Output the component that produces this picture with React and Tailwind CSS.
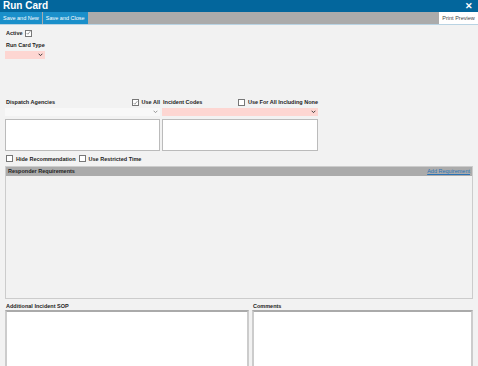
export default function App() {
  const Check = ({ on }) => (
    <span className="inline-flex w-[7px] h-[7px] border border-[#777] bg-white items-center justify-center shrink-0">
      {on && (
        <svg viewBox="0 0 8 8" className="w-[6px] h-[6px]">
          <path d="M1 4l2 2 4-5" fill="none" stroke="#666" strokeWidth="1" />
        </svg>
      )}
    </span>
  )
  const Chevron = () => (
    <svg viewBox="0 0 8 6" className="w-[5px] h-[4px]">
      <path d="M1 1l3 3 3-3" fill="none" stroke="#333" strokeWidth="1.5" />
    </svg>
  )

  return (
    <div className="w-[478px] h-[366px] overflow-hidden bg-[#f2f2f2] text-[#222] font-['Liberation_Sans',sans-serif] text-[5.5px] font-bold flex flex-col">
      {/* Title bar */}
      <div className="h-[12px] shrink-0 bg-[#03669c] flex items-center justify-between px-[3px]">
        <span className="text-white text-[10px] leading-none">Run Card</span>
        <span className="text-white text-[9px] leading-none mr-[2px]">✕</span>
      </div>

      {/* Toolbar */}
      <div className="h-[13px] shrink-0 bg-[#ababab] flex items-stretch border-b-[1px] border-[#b9d3e3]">
        <button className="bg-[#1a8fca] text-white font-normal text-[5.5px] px-[3px] whitespace-nowrap">Save and New</button>
        <button className="bg-[#1a8fca] text-white font-normal text-[5.5px] px-[3px] ml-[1px] whitespace-nowrap">Save and Close</button>
        <div className="flex-1" />
        <button className="bg-white text-[#444] font-normal text-[5.5px] w-[39px] whitespace-nowrap">Print Preview</button>
      </div>

      <div className="px-[5px] flex flex-col shrink-0">
        <div className="flex items-center gap-[2px] mt-[4px] ml-[1px]">
          <span>Active</span>
          <Check on />
        </div>
        <div className="mt-[4px] ml-[1px]">Run Card Type</div>
        <div className="w-[40px] h-[8px] bg-[#fdd6d2] mt-[1px] flex items-center justify-end pr-[2px]">
          <Chevron />
        </div>

        <div className="flex gap-[2px] mt-[40px]">
          <div className="w-[155px] flex flex-col">
            <div className="flex items-center justify-between pl-[1px] h-[8px]">
              <span>Dispatch Agencies</span>
              <span className="flex items-center gap-[3px]"><Check on />Use All</span>
            </div>
            <div className="h-[8px] bg-white mt-[1px] flex items-center justify-end pr-[2px] opacity-50">
              <Chevron />
            </div>
            <div className="h-[32px] bg-white border border-[#bbb] mt-[3px]" />
          </div>
          <div className="w-[156px] flex flex-col">
            <div className="flex items-center justify-between pl-[1px] h-[8px]">
              <span>Incident Codes</span>
              <span className="flex items-center gap-[3px]"><Check />Use For All Including None</span>
            </div>
            <div className="h-[8px] bg-[#fdd6d2] mt-[1px] flex items-center justify-end pr-[2px]">
              <Chevron />
            </div>
            <div className="h-[32px] bg-white border border-[#bbb] mt-[3px]" />
          </div>
        </div>

        <div className="flex items-center gap-[3px] mt-[4px] ml-[1px]">
          <Check /><span>Hide Recommendation</span>
          <Check /><span>Use Restricted Time</span>
        </div>

        <div className="mt-[3px] w-[468px] h-[133px] border border-[#ccc] flex flex-col">
          <div className="h-[9px] bg-[#ababab] flex items-center justify-between px-[2px]">
            <span>Responder Requirements</span>
            <span className="text-[#2a72b5] font-normal underline">Add Requirement</span>
          </div>
          <div className="flex-1 bg-[#f2f2f2]" />
        </div>

        <div className="flex gap-[3px] mt-[4px] w-[468px]">
          <div className="w-[244px] flex flex-col">
            <div className="ml-[1px] h-[6px] leading-[6px]">Additional Incident SOP</div>
            <div className="h-[60px] bg-white border-2 border-[#ccc] border-t-[#aaa] mt-[1px]" />
          </div>
          <div className="flex-1 flex flex-col">
            <div className="ml-[1px] h-[6px] leading-[6px]">Comments</div>
            <div className="h-[60px] bg-white border-2 border-[#ccc] border-t-[#aaa] mt-[1px]" />
          </div>
        </div>
      </div>
    </div>
  )
}
